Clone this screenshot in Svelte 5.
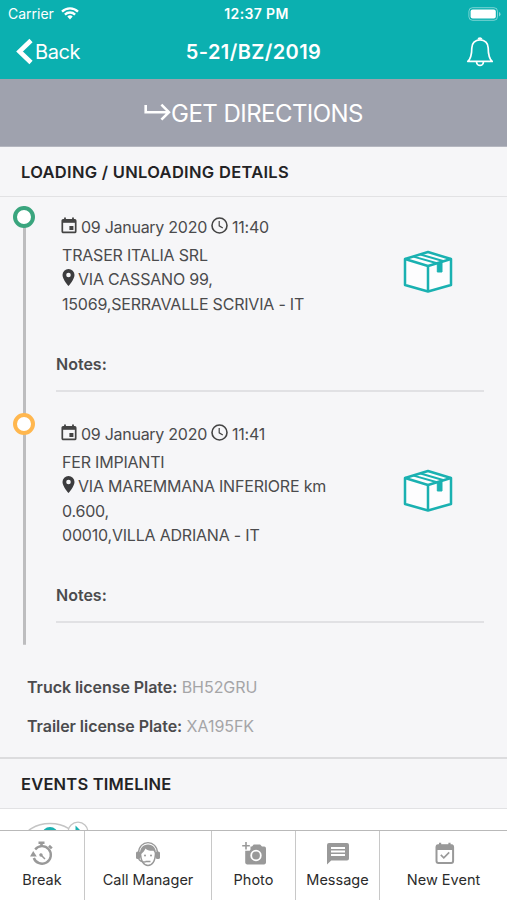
<script>
	const stops = [
		{
			date: '09 January 2020',
			time: '11:40',
			company: 'TRASER ITALIA SRL',
			street: ['VIA CASSANO 99,'],
			city: '15069,SERRAVALLE SCRIVIA - IT',
			status: 'done'
		},
		{
			date: '09 January 2020',
			time: '11:41',
			company: 'FER IMPIANTI',
			street: ['VIA MAREMMANA INFERIORE km', '0.600,'],
			city: '00010,VILLA ADRIANA - IT',
			status: 'pending'
		}
	];

	const plates = [
		{ label: 'Truck license Plate:', value: 'BH52GRU' },
		{ label: 'Trailer license Plate:', value: 'XA195FK' }
	];

	const tabs = [
		{ id: 'break', label: 'Break' },
		{ id: 'call', label: 'Call Manager', wide: true },
		{ id: 'photo', label: 'Photo' },
		{ id: 'message', label: 'Message' },
		{ id: 'event', label: 'New Event', wide: true }
	];
</script>

<div class="screen">
	<header>
		<div class="status">
			<div class="carrier">
				<span>Carrier</span>
				<svg width="18" height="13" viewBox="0 0 18 13" fill="none" stroke="#fff" stroke-width="2.3">
					<path d="M1 4.6a11.4 11.4 0 0 1 16 0" />
					<path d="M3.9 7.6a7.2 7.2 0 0 1 10.2 0" />
					<path d="M6.3 9.6a3.9 3.9 0 0 1 5.4 0L9 12.6z" fill="#fff" stroke="none" />
				</svg>
			</div>
			<span class="clock">12:37 PM</span>
			<svg class="battery" width="33" height="14" viewBox="0 0 33 14">
				<rect x="0.9" y="0.7" width="28.6" height="12.6" rx="3.6" fill="none" stroke="#fff" stroke-opacity="0.45" />
				<rect x="2.6" y="2.4" width="25.2" height="9.2" rx="2" fill="#fff" />
				<path d="M31 5v4.400q1.500-.6 1.500-2.200T31 5z" fill="#fff" fill-opacity="0.5" />
			</svg>
		</div>
		<div class="nav">
			<button class="back">
				<svg width="17" height="28" viewBox="0 0 17 28" fill="none" stroke="#fff" stroke-width="4.600">
					<path d="M15 2.500 3.500 13.500 15 24.500" />
				</svg>
				<span>Back</span>
			</button>
			<h1>5-21/BZ/2019</h1>
			<svg class="bell" width="28" height="30" viewBox="0 0 28 30" fill="none" stroke="#fff" stroke-width="1.7" stroke-linejoin="round">
				<path d="M14 2.800c-5 0-8.200 3.400-8.200 8.200 0 7.400-.8 10.500-4 13.400h24.400c-3.200-2.900-4-6-4-13.400 0-4.800-3.200-8.200-8.200-8.200z" />
				<path d="M12.300 2.600a1.700 1.500 0 0 1 3.400 0M10.600 25a3.400 3.400 0 0 0 6.800 0" />
			</svg>
		</div>
	</header>

	<button class="directions">
		<svg width="27" height="18" viewBox="0 0 27 18" fill="none" stroke="#fff" stroke-width="2.600">
			<path d="M1.700 2v7.200H24.500M17.400 1.700l7.500 7.500-7.500 7.500" />
		</svg>
		<span>GET DIRECTIONS</span>
	</button>

	<h2 class="loading">LOADING / UNLOADING DETAILS</h2>

	<section class="timeline">
		{#each stops as stop}
			<article class="stop">
				<div class="rail"><i class="marker {stop.status}"></i></div>
				<div class="body">
					<div class="top">
						<div class="details">
							<div class="when">
								<svg width="16" height="17" viewBox="0 0 16 17" fill="none" stroke="#444" stroke-width="1.700">
									<rect x="1.300" y="2.800" width="13.400" height="12.600" rx="1" />
									<path d="M1.300 4.300h13.400" stroke-width="3" />
									<path d="M4 .5v3M12 .5v3" stroke-width="1.800" />
									<rect x="8.400" y="9" width="4" height="4" fill="#444" stroke="none" />
								</svg>
								<span class="date">{stop.date}</span>
								<svg class="time-icon" width="17" height="17" viewBox="0 0 17 17" fill="none" stroke="#444" stroke-width="1.600">
									<circle cx="8.500" cy="8.500" r="7.500" />
									<path d="M8.200 4v4.800l3.600 2.300" stroke-width="1.200" />
								</svg>
								<span class="time">{stop.time}</span>
							</div>
							<div>{stop.company}</div>
							{#each stop.street as line, i}
								<div class="line">
									{#if i === 0}
										<svg class="pin" width="13" height="17" viewBox="0 0 13 17">
											<path d="M6.500 0A6 6 0 0 0 .5 6c0 4.500 6 11 6 11s6-6.500 6-11a6 6 0 0 0-6-6zm0 8.300a2.300 2.300 0 1 1 0-4.600 2.300 2.300 0 0 1 0 4.600z" fill="#3c3c3e" />
										</svg>
									{/if}
									<span>{line}</span>
								</div>
							{/each}
							<div>{stop.city}</div>
						</div>
						<svg class="package" width="50" height="43" viewBox="0 0 50 43" fill="#fdfdfe" stroke="#1ab1b1" stroke-width="2.500" stroke-linejoin="round">
							<path d="M2 9 25 2l23 7v26L25 41.500 2 35z" />
							<path d="M2 9l23 7 23-7M25 16v25.500" fill="none" />
							<path d="M10.500 6.600 34 13.200M17.500 4.500 40 11" fill="none" stroke-width="2" />
							<path d="m34.300 13.200 4.700-1.400v10.200h-4.700z" fill="#1ab1b1" stroke-width="1" />
						</svg>
					</div>
					<p class="notes">Notes:</p>
				</div>
			</article>
		{/each}
	</section>

	<section class="plates">
		{#each plates as plate}
			<p><b>{plate.label}</b> <span>{plate.value}</span></p>
		{/each}
	</section>

	<h2 class="events">EVENTS TIMELINE</h2>

	<section class="feed">
		<svg width="68" height="21" viewBox="0 0 68 21" fill="#fff">
			<ellipse cx="27" cy="31" rx="26" ry="16.500" stroke="#c4c4c4" stroke-width="1.500" />
			<circle cx="27" cy="26" r="6.500" fill="none" stroke="#1ab1b1" stroke-width="3" />
			<circle cx="55" cy="23" r="9.800" stroke="#c4c4c4" stroke-width="1.300" />
			<path d="M52.500 16.500v7h7z" fill="#1ab1b1" />
		</svg>
	</section>

	<nav class="tabs">
		{#each tabs as tab}
			<button class="tab" class:wide={tab.wide}>
				<svg class="icon" width="26" height="26" viewBox="0 0 26 26" fill="none" stroke="#999" stroke-width="2">
					{#if tab.id === 'break'}
						<path d="M6.200 8.400a8.800 8.800 0 1 1-1.400 8.600" stroke-width="2.400" />
						<path d="M9.500 1.800h6M12.500 2v3.500" stroke-width="2.600" />
						<path d="m20 4.800 2.800 2.600" stroke-width="2.600" />
						<path d="M1 15.500 4.200 10l3.600 5.500z" fill="#999" stroke="none" />
						<path d="m11 13 5 5" stroke-width="1.500" />
						<circle cx="12" cy="14" r="1.700" fill="#999" stroke="none" />
					{:else if tab.id === 'call'}
						<path d="M5.500 11.500c0 9 3.500 13 7.500 13s7.500-4 7.500-13" stroke-width="1.500" />
						<path d="M3.600 12C3.600 5.500 8 1.600 13 1.600s9.400 3.900 9.400 10.400" stroke-width="1.400" />
						<path d="M5 14c-.6-6.500 3-10.500 8-10.500s8.600 4 8 10.500l-2.500-4.200c-4 .2-6.800-.8-8-2.400-.8 2.200-2.500 4-5.500 6.600z" fill="#999" stroke="none" />
						<rect x="1" y="10.500" width="4.200" height="7.500" rx="1.600" fill="#999" stroke="none" />
						<rect x="20.800" y="10.500" width="4.200" height="7.500" rx="1.600" fill="#999" stroke="none" />
						<path d="M3.500 17.500c1 2.500 3.500 3.500 7 3.500M10.500 20.500h5" stroke-width="1.300" />
						<circle cx="10" cy="14.500" r="1" fill="#999" stroke="none" />
						<circle cx="16" cy="14.500" r="1" fill="#999" stroke="none" />
					{:else if tab.id === 'photo'}
						<path d="M5 1v7.500M1.200 4.700h7.600" stroke-width="1.600" />
						<path d="M9.500 8.500V5.600H11l1.700-2.100h6.400L21 5.600h2.200a1.800 1.800 0 0 1 1.800 1.800v14.200a1.800 1.800 0 0 1-1.800 1.800H6a1.800 1.800 0 0 1-1.800-1.800V9.800h4.500z" fill="#999" stroke="none" />
						<circle cx="15" cy="14.500" r="4.800" stroke="#fff" stroke-width="1.800" />
					{:else if tab.id === 'message'}
						<path d="M4 2h18a2 2 0 0 1 2 2v13.500a2 2 0 0 1-2 2H6.200L2 23.500V4a2 2 0 0 1 2-2z" fill="#999" stroke="none" />
						<path d="M6 6.900h14M6 10.500h14M6 14.100h14" stroke="#fff" />
					{:else}
						<rect x="5.500" y="4.300" width="16.600" height="17.600" rx="2" stroke-width="2" />
						<path d="M5.500 6.400h16.600" stroke-width="5.200" />
						<path d="M9.100 1.700v4M18.500 1.700v4" stroke-width="2.200" />
						<path d="m9.800 13.900 3 3 5.400-5.500" stroke-width="1.600" />
					{/if}
				</svg>
				<span>{tab.label}</span>
			</button>
		{/each}
	</nav>
</div>

<style>
	:global(body) {
		margin: 0;
	}

	.screen {
		display: flex;
		flex-direction: column;
		width: 507px;
		height: 900px;
		overflow: hidden;
		background: #f6f6f8;
		color: #4b4b4d;
		font-family: Inter, Roboto, sans-serif;
	}

	.screen > * {
		flex-shrink: 0;
	}

	button {
		padding: 0;
		border: 0;
		background: none;
		color: inherit;
		font: inherit;
	}

	svg {
		display: block;
		flex-shrink: 0;
	}

	header {
		box-sizing: border-box;
		height: 79px;
		background: #0bb0b0;
		color: #fff;
	}

	.status,
	.nav {
		display: grid;
		grid-template-columns: 1fr auto 1fr;
		align-items: center;
	}

	.status {
		height: 27px;
		padding: 0 6px 0 8px;
		font-size: 14px;
	}

	.carrier {
		display: flex;
		align-items: center;
		gap: 7px;
	}

	.clock {
		margin-left: 4px;
		font-size: 14px;
		font-weight: 600;
		letter-spacing: 0.35px;
	}

	.battery,
	.bell {
		justify-self: end;
	}

	.nav {
		height: 50px;
		padding: 0 13px 0 16px;
	}

	.back {
		display: flex;
		align-items: center;
		gap: 2px;
		font-size: 20px;
		letter-spacing: -0.4px;
	}

	h1 {
		margin: 0 0 0 -3px;
		font-size: 20px;
		font-weight: 600;
		letter-spacing: 0.4px;
	}

	.directions {
		display: flex;
		align-items: center;
		justify-content: center;
		height: 68px;
		padding-top: 2px;
		border-bottom: 1px solid #b5b7c0;
		box-sizing: border-box;
		background: #9fa2ae;
		color: #fff;
		font-size: 24px;
		letter-spacing: -0.55px;
	}

	.directions svg {
		margin-top: -4px;
	}

	h2 {
		box-sizing: border-box;
		height: 50px;
		margin: 0;
		padding-left: 21px;
		border-bottom: 1px solid #e2e2e4;
		color: #232325;
		font-size: 16.5px;
		font-weight: 600;
		letter-spacing: 0.3px;
		line-height: 50px;
	}

	.events {
		letter-spacing: 0.2px;
		line-height: 51px;
	}

	.timeline {
		height: 447px;
		padding-top: 9px;
		box-sizing: border-box;
	}

	.stop {
		display: grid;
		grid-template-columns: 48px 1fr;
	}

	.rail {
		display: flex;
		justify-content: center;
		background: linear-gradient(#bdbdbf, #bdbdbf) center / 3px 100% no-repeat;
	}

	.marker {
		box-sizing: border-box;
		width: 22px;
		height: 22px;
		border: 4px solid #3aa57e;
		border-radius: 50%;
		background: #fff;
	}

	.marker.pending {
		border-color: #ffb74f;
	}

	.body {
		padding: 9px 23px 21.5px 8px;
	}

	.top {
		display: flex;
		align-items: center;
		justify-content: space-between;
		padding: 0 31px 0 6px;
	}

	.details {
		font-size: 16px;
		letter-spacing: -0.2px;
		line-height: 24.4px;
		white-space: nowrap;
	}

	.when {
		display: flex;
		align-items: center;
		margin-bottom: 3.5px;
	}

	.when svg {
		margin: -3px 4px 0 -1px;
	}

	.when .time-icon {
		margin-left: 4px;
	}

	.date {
		letter-spacing: -0.27px;
	}

	.line {
		display: flex;
		align-items: center;
	}

	.pin {
		margin: -4px 3px 0 0;
	}

	.package {
		margin-top: 12px;
	}

	.notes {
		margin: 35.5px 0 0;
		padding-bottom: 14px;
		border-bottom: 2px solid #e1e1e4;
		font-size: 16px;
		font-weight: 600;
		line-height: 24px;
	}

	.plates {
		box-sizing: border-box;
		height: 115px;
		padding: 24px 27px 0;
		border-bottom: 2px solid #dcdcde;
		font-size: 16px;
	}

	.plates p {
		margin: 0;
		letter-spacing: -0.05px;
		line-height: 39px;
	}

	.plates b {
		font-weight: 600;
	}

	.plates span {
		color: #a5a5a7;
	}

	.feed {
		display: flex;
		align-items: flex-end;
		height: 21px;
		padding-left: 23px;
		background: #fff;
	}

	.tabs {
		display: grid;
		grid-template-columns: 85px 127px 84px 84px 127px;
		height: 70px;
		border-top: 1px solid #b9b9b9;
		box-sizing: border-box;
		background: #fff;
		color: #2b2b2b;
		font-size: 14.5px;
	}

	.tab {
		display: flex;
		flex-direction: column;
		align-items: center;
		padding-top: 10px;
		border-right: 1.5px solid #c8c8c8;
	}

	.tab:last-child {
		border-right: 0;
	}

	.tab span {
		margin-top: 3px;
		line-height: 20px;
	}
</style>
